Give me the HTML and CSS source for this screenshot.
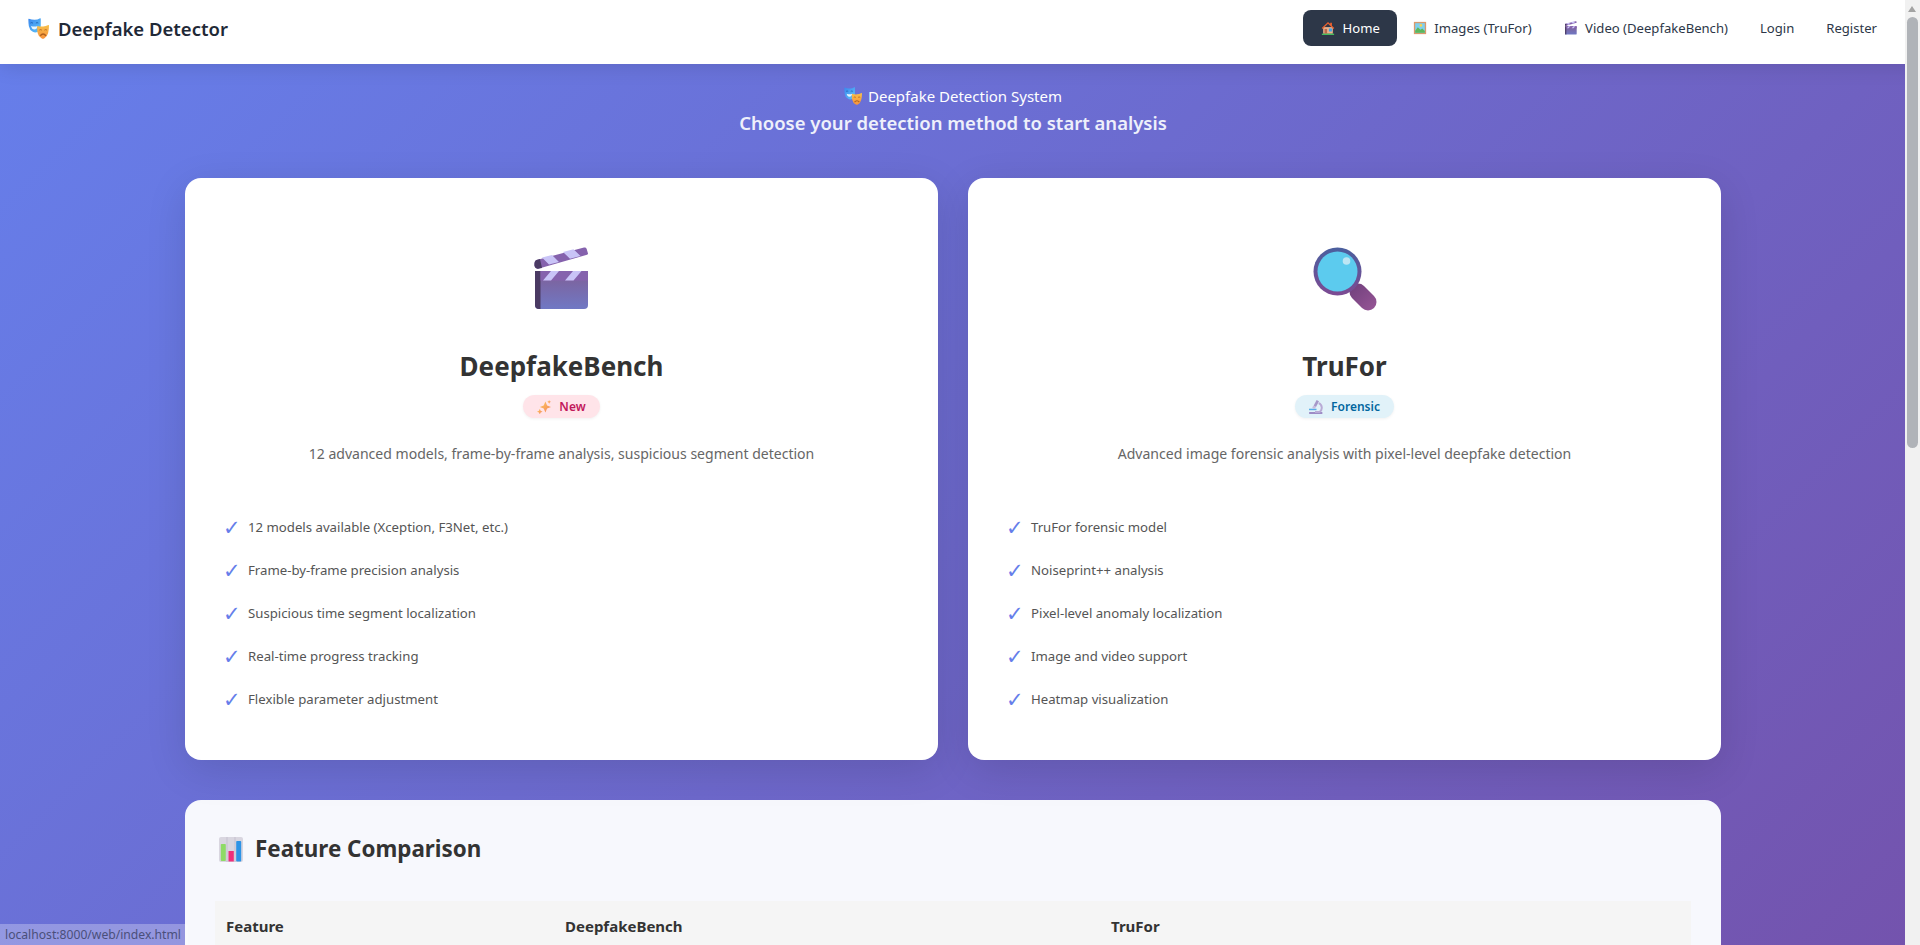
FILE: index.html
```html
<!DOCTYPE html>
<html lang="en">
<head>
<meta charset="utf-8">
<title>Deepfake Detector</title>
<link rel="stylesheet" href="styles.css">
</head>
<body>
<svg class="defs" width="0" height="0" aria-hidden="true">
  <defs>
    <linearGradient id="mb" x1="0" y1="0" x2="1" y2="1"><stop offset="0" stop-color="#3a86ee"/><stop offset="1" stop-color="#5fc4f7"/></linearGradient>
    <linearGradient id="mo" x1="0" y1="0" x2="0" y2="1"><stop offset="0" stop-color="#f7c04a"/><stop offset="1" stop-color="#f8923c"/></linearGradient>
    <linearGradient id="cb" x1="0" y1="0" x2="0" y2="1"><stop offset="0" stop-color="#7f5f96"/><stop offset="1" stop-color="#7078c4"/></linearGradient>
    <linearGradient id="ring" x1="0" y1="0" x2="0" y2="1"><stop offset="0" stop-color="#4a5f9e"/><stop offset="1" stop-color="#7d4a92"/></linearGradient>
    <linearGradient id="hand" gradientUnits="userSpaceOnUse" x1="40" y1="40" x2="60" y2="60"><stop offset="0" stop-color="#74427f"/><stop offset="1" stop-color="#925393"/></linearGradient>
    <linearGradient id="spark" x1="0" y1="0" x2="1" y2="1"><stop offset="0" stop-color="#fcc85e"/><stop offset="1" stop-color="#f5855b"/></linearGradient>
    <symbol id="masks" viewBox="0 0 24 24">
      <path d="M1 .8Q4 2 7.500 2T13.800 .2q.7-.2.8.6V9q0 5-3.300 6.800-3 1.400-5.800 0Q1.800 14 1 9.500 .4 5 .4 1.400 .4 .7 1 .8z" fill="url(#mb)"/>
      <path d="M2.800 5.800q1.300-1 2.800 0M9 5.800q1.400-1 2.800 0" stroke="#1b5fb0" stroke-width="1" fill="none"/>
      <path d="M3.500 9q3.800 1.500 7.500 0-.8 4-3.700 4T3.500 9z" fill="#e8f6ff"/>
      <path d="M11 9q3 1 6.200.8T23.200 8q.8-.2.8.6 0 4.500-1 8.400-1 4.500-4.600 6.400-1.300.7-2.600 0-3.800-1.800-4.800-6.400C10.200 14 10.300 9 11 9z" fill="url(#mo)"/>
      <path d="M13 13.800q1.300-1 2.800 0M18.800 13.800q1.300-1 2.800 0" stroke="#b0601e" stroke-width="1" fill="none"/>
      <path d="M14 20.300q3.300-4 6.500 0" stroke="#b0601e" stroke-width="1.500" fill="none"/>
    </symbol>
    <symbol id="house" viewBox="0 0 16 16">
      <rect x="2.500" y="7" width="11" height="7.500" fill="#eeb48c"/>
      <path d="M8 1L.8 8l1 1L8 3l6.200 6 1-1L12.500 5.400V2h-2v1.500z" fill="#e8602f"/>
      <rect x="4" y="9" width="3" height="5.500" fill="#b9694a"/>
      <rect x="9" y="8.500" width="3.500" height="3.500" fill="#3fa3e8"/>
      <rect x="1" y="14.500" width="14" height="1.300" fill="#4cd964"/>
    </symbol>
    <symbol id="picture" viewBox="0 0 16 16">
      <rect x="1" y="1" width="14" height="14" fill="#d99a6c"/>
      <rect x="2.500" y="2.500" width="11" height="11" fill="#7fd0ee"/>
      <circle cx="9" cy="5" r="1.500" fill="#fcd34d"/>
      <path d="M2.500 11l3-4 3 3 2-1.500 3 3v2h-11z" fill="#5eb85a"/>
    </symbol>
    <symbol id="clapper" viewBox="0 0 56 64">
      <path d="M1 24h53v34a4 4 0 0 1-4 4H5a4 4 0 0 1-4-4z" fill="url(#cb)"/>
      <path d="M1 24h5.500v38H5a4 4 0 0 1-4-4z" fill="#4a3a63"/>
      <rect x="6.500" y="24" width="47.500" height="9.500" fill="#8562ad"/>
      <path d="M9 33.500L17 24h8l-8 9.500zM31 33.500L39 24h8.500l-8 9.500z" fill="#c9c4f7"/>
      <path d="M2.500 13L50 .6q2-.4 2.700 1.400l1.300 4.400q.3 1-1 1.400L5 21.500Q1.500 22.500.5 19 0 14 2.500 13z" fill="#8562ad"/>
      <path d="M2.500 13l3.500-1 2 9L5 21.500Q1.500 22.500.5 19 0 14 2.500 13z" fill="#4a3a63"/>
      <path d="M8 10.500l10-2.600 7 7L15 17.500zM29 5l10.500-2.700 7 6.600L36 11.800z" fill="#c9c4f7"/>
    </symbol>
    <symbol id="lens" viewBox="0 0 64 64">
      <path d="M45 45L55 55" stroke="url(#hand)" stroke-width="17" stroke-linecap="round"/>
      <circle cx="24.500" cy="24.500" r="24" fill="url(#ring)"/>
      <circle cx="24.500" cy="24.500" r="20" fill="#5ccbee"/>
      <circle cx="33.500" cy="14" r="3.800" fill="#bde6f4"/>
    </symbol>
    <symbol id="sparkles" viewBox="0 0 15 15">
      <path d="M9 1.500l1.800 4.300 4.200 1.700-4.200 1.700L9 13.500 7.200 9.200 3 7.500l4.200-1.700z" fill="url(#spark)"/>
      <path d="M3 9.500l.9 2.100 2.100.9-2.100.9-.9 2.100-.9-2.100-2.100-.9 2.100-.9z" fill="url(#spark)"/>
      <path d="M13 0l.6 1.400 1.400.6-1.400.6-.6 1.400-.6-1.400-1.400-.6 1.400-.6z" fill="url(#spark)"/>
    </symbol>
    <symbol id="scope" viewBox="0 0 14 14">
      <rect x="0" y="12" width="13.500" height="2" rx=".7" fill="#9d8cc6"/>
      <path d="M7.600 0l2.400 1.300L7 7 4.600 5.700z" fill="#a698c9"/>
      <path d="M9.700 3.200a5 5 0 0 1 .8 8.800H6" stroke="#b9abd6" stroke-width="2" fill="none"/>
      <rect x="0" y="8.700" width="7.500" height="1.500" fill="#58aee8"/>
      <circle cx="5" cy="7.300" r="1.500" fill="#c7bde0"/>
    </symbol>
    <symbol id="chart" viewBox="0 0 24 25">
      <rect width="24" height="25" rx="2" fill="#d9d6e0"/>
      <path d="M8 0v25M16 0v25" stroke="#bdb9c8" stroke-width=".7"/>
      <rect x="1.800" y="7" width="5" height="17" rx=".8" fill="#8edb66"/>
      <rect x="9.500" y="14" width="5.300" height="10.500" fill="#ee2f7a"/>
      <rect x="17.200" y="4" width="5" height="20.500" rx=".8" fill="#2d93e6"/>
    </symbol>
  </defs>
</svg>

<div class="page">
  <nav class="navbar">
    <a class="brand"><svg class="brand-icon"><use href="#masks"/></svg><span>Deepfake Detector</span></a>
    <div class="nav-links">
      <a class="nav-link active"><svg class="nav-icon"><use href="#house"/></svg>Home</a>
      <a class="nav-link"><svg class="nav-icon"><use href="#picture"/></svg>Images (TruFor)</a>
      <a class="nav-link"><svg class="nav-icon"><use href="#clapper"/></svg>Video (DeepfakeBench)</a>
      <a class="nav-link">Login</a>
      <a class="nav-link">Register</a>
    </div>
  </nav>

  <main class="content">
    <header class="hero">
      <p class="hero-title"><svg class="hero-icon"><use href="#masks"/></svg>Deepfake Detection System</p>
      <p class="hero-sub">Choose your detection method to start analysis</p>
    </header>

    <section class="cards">
      <article class="card">
        <div class="card-icon"><svg class="big-icon"><use href="#clapper"/></svg></div>
        <h2 class="card-title">DeepfakeBench</h2>
        <div class="badge-row"><span class="badge badge-new"><svg class="badge-icon"><use href="#sparkles"/></svg>New</span></div>
        <p class="card-desc">12 advanced models, frame-by-frame analysis, suspicious segment detection</p>
        <ul class="features">
          <li>12 models available (Xception, F3Net, etc.)</li>
          <li>Frame-by-frame precision analysis</li>
          <li>Suspicious time segment localization</li>
          <li>Real-time progress tracking</li>
          <li>Flexible parameter adjustment</li>
        </ul>
      </article>
      <article class="card">
        <div class="card-icon"><svg class="big-icon"><use href="#lens"/></svg></div>
        <h2 class="card-title">TruFor</h2>
        <div class="badge-row"><span class="badge badge-forensic"><svg class="badge-icon"><use href="#scope"/></svg>Forensic</span></div>
        <p class="card-desc">Advanced image forensic analysis with pixel-level deepfake detection</p>
        <ul class="features">
          <li>TruFor forensic model</li>
          <li>Noiseprint++ analysis</li>
          <li>Pixel-level anomaly localization</li>
          <li>Image and video support</li>
          <li>Heatmap visualization</li>
        </ul>
      </article>
    </section>

    <section class="compare">
      <h3 class="compare-title"><svg class="chart-icon"><use href="#chart"/></svg>Feature Comparison</h3>
      <table class="compare-table">
        <thead><tr><th class="col-a">Feature</th><th class="col-b">DeepfakeBench</th><th>TruFor</th></tr></thead>
      </table>
    </section>
  </main>

  <div class="scrollbar"><span class="arrow"></span><span class="thumb"></span></div>
  <div class="status">localhost:8000/web/index.html</div>
</div>
</body>
</html>
```

FILE: styles.css
```css
* { box-sizing: border-box; }
html, body { margin: 0; height: 100%; overflow: hidden; }
body { font-family: "Noto Sans", "Open Sans", sans-serif; color: #333; }
.defs { position: absolute; }
.page { position: relative; height: 945px; overflow: hidden; background: #7650ab; }

.navbar {
  position: relative; z-index: 2;
  height: 64px; padding: 10px 12px 0 28px; background: #fff;
  display: flex; align-items: flex-start; justify-content: space-between;
  box-shadow: 0 2px 20px rgba(0,0,0,.12);
}
.brand { display: flex; align-items: center; gap: 9px; height: 36px; font-size: 18.5px; font-weight: 600; color: #1f2937; }
.brand-icon { width: 21px; height: 21px; }
.nav-links { display: flex; align-items: center; margin-right: 15px; }
.nav-link { display: flex; align-items: center; height: 36px; padding: 0 16px; border-radius: 8px; font-size: 13.1px; color: #2d3748; }
.nav-link.active { padding: 0 17px 0 18px; background: #2d3748; color: #fff; }
.nav-icon { width: 14px; height: 14px; margin-right: 7.5px; }

.content {
  height: 881px; padding: 22px 199px 0 185px;
  background: linear-gradient(135deg, #667eea 0%, #764ba2 100%) 0 0 / 1920px 1400px no-repeat;
}
.hero { text-align: center; color: #fff; margin-bottom: 42px; }
.hero-title { margin: 0; display: flex; align-items: center; justify-content: center; gap: 6px; font-size: 15px; line-height: 20px; }
.hero-icon { width: 18px; height: 18px; }
.hero-sub { margin: 4px 0 0; font-size: 18.5px; line-height: 26px; font-weight: 600; color: #eef0fb; }

.cards { display: grid; grid-template-columns: 1fr 1fr; gap: 30px; }
.card { height: 582px; padding: 69px 40px 0; background: #fff; border-radius: 16px; box-shadow: 0 10px 40px rgba(0,0,0,.12); }
.card-icon { display: flex; justify-content: center; height: 64px; }
.big-icon { width: 64px; height: 64px; }
.card-title { margin: 36px 0 0; text-align: center; font-size: 26px; line-height: 38px; font-weight: 700; color: #333; }
.badge-row { display: flex; justify-content: center; margin-top: 10px; }
.badge { display: flex; align-items: center; height: 23px; padding: 0 14px; border-radius: 12px; font-size: 12px; font-weight: 600; box-shadow: 0 1px 3px rgba(0,0,0,.06); }
.badge-new { background: #ffe4e9; color: #c2185b; }
.badge-forensic { background: #e1f2f9; color: #01669f; }
.badge-icon { width: 14px; height: 14px; margin-right: 8px; }
.card-desc { margin: 25px 0 0; text-align: center; font-size: 14.05px; line-height: 22px; color: #666; }
.features { list-style: none; margin: 41px 0 0; padding: 0; }
.features li { position: relative; height: 43px; padding-left: 23px; font-size: 13.2px; line-height: 43px; color: #555; }
.features li::before { content: "✓"; position: absolute; left: -2px; top: 1px; font-family: "DejaVu Sans", sans-serif; font-size: 21px; font-weight: 700; color: #667eea; }

.compare { margin-top: 40px; height: 300px; padding: 31px 30px 30px; background: #f7f8fd; border-radius: 16px; }
.compare-title { margin: 0; display: flex; align-items: center; gap: 12px; font-size: 22.4px; line-height: 36px; font-weight: 700; color: #333; }
.chart-icon { width: 24px; height: 25px; margin-left: 4px; }
.compare-table { width: 100%; margin-top: 34px; border-collapse: collapse; table-layout: fixed; }
.compare-table th { padding: 15px 11px; background: #f5f5f5; text-align: left; font-size: 15px; font-weight: 700; color: #333; }
.col-a { width: 339px; }
.col-b { width: 546px; }

.scrollbar { position: absolute; z-index: 3; top: 0; right: 0; bottom: 0; width: 15px; background: #f1f1f1; }
.arrow { position: absolute; top: 6px; left: 3px; border: 4.500px solid transparent; border-top: 0; border-bottom: 6px solid #a3a3a3; }
.thumb { position: absolute; top: 17px; left: 2px; width: 11px; height: 431px; border-radius: 6px; background: #b0b3b8; }
.status {
  position: absolute; z-index: 3; left: 0; bottom: 0; height: 21px; padding: 0 7px 0 5px;
  background: rgba(255,255,255,.28); border-top-right-radius: 3px;
  font-size: 12.15px; line-height: 21px; color: #4a4f7a;
}
```
